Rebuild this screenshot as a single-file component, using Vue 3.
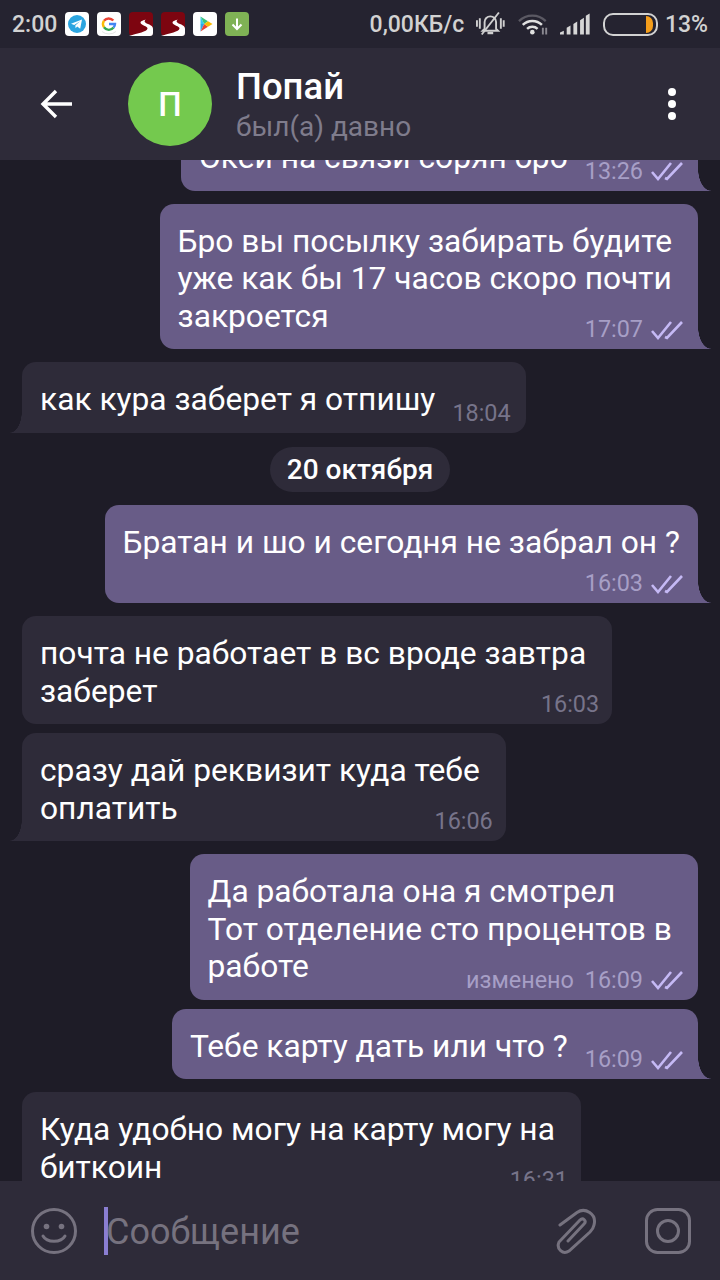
<template>
  <div class="phone">
    <div class="status">
      <span class="clock">2:00</span>
      <div class="apps">
        <svg class="app" viewBox="0 0 24 24">
          <rect width="24" height="24" rx="4" fill="#fff" />
          <circle cx="12" cy="12" r="9" fill="#2ca5e0" />
          <path d="M6 11.8 17 7.5 15.2 16.8 12.2 14.6 10.6 16.2 10.3 13.4 15 9.3 9.2 12.9Z" fill="#fff" />
        </svg>
        <svg class="app" viewBox="0 0 24 24">
          <rect width="24" height="24" rx="4" fill="#fff" />
          <path d="M16.3 8.6A6 6 0 0 0 7 8.7" fill="none" stroke="#ea4335" stroke-width="2.4" />
          <path d="M7 8.7a6 6 0 0 0 0 6.6" fill="none" stroke="#fbbc05" stroke-width="2.4" />
          <path d="M7 15.3a6 6 0 0 0 9.6.3" fill="none" stroke="#34a853" stroke-width="2.4" />
          <path d="M12 12h6a6 6 0 0 1-1.4 3.6" fill="none" stroke="#4285f4" stroke-width="2.4" />
          <path d="M5 19.5a11 11 0 0 0 14 0" fill="none" stroke="#ddd" stroke-width="0.8" />
        </svg>
        <svg v-for="n in 2" :key="n" class="app" viewBox="0 0 24 24">
          <rect width="24" height="24" rx="4" fill="#7d0510" />
          <path d="M0 24C9 21 18 20 18.5 16.5 19 14 11.5 13.5 11.5 10.5 11.5 9 15 8 17 7.5 14.5 9 15.5 10.5 19 12 23 13.5 24 15 24 17V21A3 3 0 0 1 21 24Z" fill="#fff" />
        </svg>
        <svg class="app" viewBox="0 0 24 24">
          <rect width="24" height="24" rx="4" fill="#fff" />
          <path d="M7.5 4.5V12h3.7Z" fill="#35c7f2" />
          <path d="M7.5 19.5V12h3.7Z" fill="#2fa9e6" />
          <path d="M7.5 4.5 15 9.2 11.2 12Z" fill="#3cc47c" />
          <path d="M7.5 19.5 15 14.8 11.2 12Z" fill="#ea4335" />
          <path d="M15 9.2 19.5 12 15 14.8 11.2 12Z" fill="#fbbc05" />
        </svg>
        <svg class="app" viewBox="0 0 24 24">
          <rect width="24" height="24" rx="4" fill="#7fb255" />
          <path d="M12 6.5V17M7.5 12.5 12 17l4.5-4.5" fill="none" stroke="#fff" stroke-width="2" />
        </svg>
      </div>
      <span class="speed">0,00КБ/с</span>
      <svg class="mute" viewBox="0 0 30 26">
        <path d="M9 18V11a6 6 0 0 1 12 0v7l2 2H7Z" fill="none" stroke="#cfcfcf" stroke-width="2" />
        <path d="M12 22.5h6" stroke="#cfcfcf" stroke-width="2.4" />
        <path d="M1 9v7M4 7v11M26 7v11M29 9v7" stroke="#cfcfcf" stroke-width="2" />
        <path d="M6 24 24 1" stroke="#cfcfcf" stroke-width="2" />
      </svg>
      <svg class="wifi" viewBox="0 0 32 24">
        <path d="M1 9a20 20 0 0 1 28 0" fill="none" stroke="#5b5963" stroke-width="2.4" />
        <path d="M5 13a14 14 0 0 1 20 0" fill="none" stroke="#e0e0e0" stroke-width="2.6" />
        <path d="M9.5 17a8 8 0 0 1 11 0" fill="none" stroke="#e0e0e0" stroke-width="2.6" />
        <circle cx="15" cy="20.5" r="2.4" fill="#e0e0e0" />
        <path d="M26 16v7M29.5 16v7" stroke="#8a8890" stroke-width="2" />
      </svg>
      <svg class="signal" viewBox="0 0 31 22">
        <path d="M0 22v-2l4-2v4ZM7 22v-7l4-2.5V22ZM14 22V11l4-2.5V22ZM21 22V7l4-2.5V22ZM27 22V2.5L31 0v22Z" fill="#d6d6d6" />
      </svg>
      <div class="battery"><span class="charge"></span></div>
      <span class="percent">13%</span>
    </div>

    <header class="topbar">
      <svg class="back" viewBox="0 0 32 30">
        <path d="M32 15H3M16 2 3 15l13 13" fill="none" stroke="#fff" stroke-width="3.4" />
      </svg>
      <div class="avatar">П</div>
      <div class="peer">
        <div class="name">Попай</div>
        <div class="seen">был(а) давно</div>
      </div>
      <div class="dots"><span></span><span></span><span></span></div>
    </header>

    <main class="chat">
      <div class="list">
        <template v-for="m in messages" :key="m.id">
          <div v-if="m.date" class="date">{{ m.date }}</div>
          <div
            v-else
            class="bubble"
            :class="[m.out ? 'out' : 'in', m.layout, { tail: m.tail, near: m.near }]"
          >
            <div class="text">{{ m.text }}</div>
            <div class="meta">
              <span>{{ m.time }}</span>
              <svg v-if="m.out" class="checks" viewBox="0 0 32 20">
                <path d="M1 11l6 7L20 2M14 17l2 1L31 2" fill="none" stroke="#c5b9f5" stroke-width="2.6" />
              </svg>
            </div>
          </div>
        </template>
      </div>
    </main>

    <footer class="composer">
      <svg class="smile" viewBox="0 0 46 46">
        <circle cx="23" cy="23" r="21.5" fill="none" stroke="#76727f" stroke-width="3" />
        <circle cx="15.5" cy="18.5" r="2.8" fill="#76727f" />
        <circle cx="30.5" cy="18.5" r="2.8" fill="#76727f" />
        <path d="M12 28c4 7 18 7 22 0" fill="none" stroke="#76727f" stroke-width="3" stroke-linecap="round" />
      </svg>
      <div class="field">
        <span class="caret"></span>
        <span class="placeholder">Сообщение</span>
      </div>
      <svg class="clip" viewBox="0 0 41 46">
        <path d="M4 17 21 4.5C29-1 41 6 38 17 37.5 20 36 22 34 24L13 43C7 47 0 41 3 34L24 12C27 9 31 13 28 16L12 33" fill="none" stroke="#76727f" stroke-width="3" stroke-linecap="round" />
      </svg>
      <svg class="cam" viewBox="0 0 46 46">
        <rect x="1.5" y="1.5" width="43" height="43" rx="11" fill="none" stroke="#76727f" stroke-width="3" />
        <circle cx="23" cy="23" r="10.5" fill="none" stroke="#76727f" stroke-width="3" />
      </svg>
    </footer>
  </div>
</template>

<script setup>
const messages = [
  { id: 1, out: true, tail: true, layout: "inline", text: "Окей на связи сорян бро", time: "13:26" },
  { id: 2, out: true, tail: true, layout: "overlap", text: "Бро вы посылку забирать будите\nуже как бы 17 часов скоро почти\nзакроется", time: "17:07" },
  { id: 3, tail: true, layout: "inline", text: "как кура заберет я отпишу", time: "18:04" },
  { id: 4, date: "20 октября" },
  { id: 5, out: true, tail: true, layout: "below", text: "Братан и шо и сегодня не забрал он ?", time: "16:03" },
  { id: 6, layout: "overlap", text: "почта не работает в вс вроде завтра\nзаберет", time: "16:03" },
  { id: 7, tail: true, near: true, layout: "overlap", text: "сразу дай реквизит куда тебе\nоплатить", time: "16:06" },
  { id: 8, out: true, layout: "overlap", text: "Да работала она я смотрел\nТот отделение сто процентов в\nработе", time: "изменено 16:09" },
  { id: 9, out: true, tail: true, near: true, layout: "inline", text: "Тебе карту дать или что ?", time: "16:09" },
  { id: 10, tail: true, layout: "overlap", text: "Куда удобно могу на карту могу на\nбиткоин", time: "16:31" },
];
</script>

<style>
html,
body {
  margin: 0;
  background: #1e1c27;
}
</style>

<style scoped>
.phone {
  width: 720px;
  height: 1280px;
  display: flex;
  flex-direction: column;
  overflow: hidden;
  background: #1e1c27;
  font-family: Roboto, "Liberation Sans", sans-serif;
  color: #fff;
}

.status {
  height: 48px;
  flex: none;
  display: flex;
  align-items: center;
  padding: 0 12px;
  background: #252330;
  color: #d2d2d2;
  font-size: 23px;
  font-weight: 500;
  white-space: nowrap;
}

.clock {
  width: 55px;
}

.apps {
  display: flex;
  gap: 8px;
}

.app {
  width: 24px;
  height: 24px;
}

.speed {
  margin-left: 121px;
}

.mute {
  width: 30px;
  height: 26px;
  margin-left: 12px;
}

.wifi {
  width: 32px;
  height: 24px;
  margin-left: 13px;
}

.signal {
  width: 31px;
  height: 22px;
  margin-left: 12px;
}

.battery {
  width: 50px;
  height: 17px;
  margin-left: 13px;
  border: 2px solid #d2d2d2;
  border-radius: 10px;
  display: flex;
  justify-content: flex-end;
  padding: 1px 3px 1px 0;
}

.charge {
  width: 7px;
  background: #f59e1b;
  border-radius: 0 8px 8px 0;
}

.percent {
  margin-left: 7px;
}

.topbar {
  height: 112px;
  flex: none;
  display: flex;
  align-items: center;
  background: #2e2b39;
  padding: 0 44px 0 40px;
}

.back {
  width: 32px;
  height: 30px;
}

.avatar {
  width: 84px;
  height: 84px;
  margin-left: 56px;
  border-radius: 50%;
  background: #74c94e;
  display: flex;
  align-items: center;
  justify-content: center;
  font-size: 33px;
  font-weight: 500;
}

.peer {
  margin-left: 24px;
  padding-top: 3px;
  flex: 1;
}

.name {
  font-size: 36.5px;
  font-weight: 500;
  line-height: 42px;
}

.seen {
  font-size: 28px;
  line-height: 36px;
  margin-top: 1px;
  color: #7f7c8c;
}

.dots {
  display: flex;
  flex-direction: column;
  gap: 4px;
}

.dots span {
  width: 8px;
  height: 8px;
  border-radius: 50%;
  background: #fff;
}

.chat {
  flex: 1;
  min-height: 0;
  overflow: hidden;
}

.list {
  display: flex;
  flex-direction: column;
  margin-top: -53px;
}

.bubble {
  position: relative;
  margin-top: 13px;
  padding: 19px 26px 14px 18px;
  border-radius: 14px;
  font-size: 31.72px;
  line-height: 37.5px;
}

.bubble.near {
  margin-top: 9px;
}

.in {
  align-self: flex-start;
  margin-left: 22px;
  background: #2e2b39;
}

.out {
  align-self: flex-end;
  margin-right: 22px;
  background: #685c87;
}

.text {
  white-space: pre-line;
}

.meta {
  display: flex;
  align-items: center;
  justify-content: flex-end;
  gap: 8px;
  font-size: 23.4px;
  word-spacing: 5px;
  line-height: 27px;
  margin-bottom: -8px;
  white-space: nowrap;
}

.in .meta {
  color: #77748a;
}

.out .meta {
  color: #a79fc6;
}

.checks {
  width: 32px;
  height: 20px;
}

.inline {
  display: flex;
  align-items: flex-end;
  gap: 17px;
  padding-right: 15px;
}

.overlap {
  display: grid;
}

.overlap .text,
.overlap .meta {
  grid-area: 1 / 1;
}

.overlap .meta {
  align-self: end;
  margin-right: -11px;
}

.in.overlap .meta {
  margin-right: -13px;
}

.below {
  padding-right: 18px;
}

.below .meta {
  margin-top: 9px;
  margin-right: -3px;
}

.tail.out {
  border-bottom-right-radius: 0;
}

.tail.in {
  border-bottom-left-radius: 0;
}

.tail::after {
  content: "";
  position: absolute;
  bottom: 0;
  width: 13px;
  height: 22px;
}

.tail.out::after {
  right: -13px;
  background: radial-gradient(ellipse 13px 22px at 100% 0, transparent 97%, #685c87 100%);
}

.tail.in::after {
  left: -12px;
  width: 12px;
  background: radial-gradient(ellipse 12px 22px at 0 0, transparent 97%, #2e2b39 100%);
}

.date {
  align-self: center;
  margin-top: 14px;
  height: 45px;
  padding: 0 17px;
  border-radius: 23px;
  background: #2e2b39;
  font-size: 28px;
  font-weight: 500;
  line-height: 45px;
}

.composer {
  height: 99px;
  flex: none;
  display: flex;
  align-items: center;
  background: #2e2b39;
  padding: 0 29px 0 31px;
}

.smile {
  width: 46px;
  height: 46px;
}

.field {
  flex: 1;
  margin-left: 27px;
  display: flex;
  align-items: center;
}

.caret {
  width: 4px;
  height: 48px;
  background: #8a7ed2;
}

.placeholder {
  font-size: 36px;
  color: #76727f;
  margin: 3px 0 0 -2px;
}

.clip {
  width: 41px;
  height: 46px;
}

.cam {
  width: 46px;
  height: 46px;
  margin-left: 48px;
}
</style>
